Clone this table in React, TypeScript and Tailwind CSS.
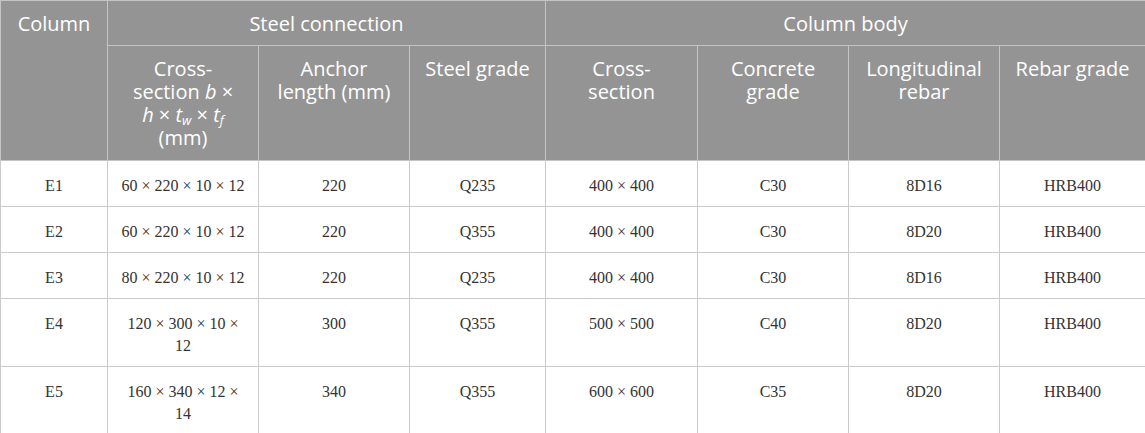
import React from "react";

const widths = [107, 151, 151, 136, 152, 151, 151, 146];

const rows: { c: string; cs: React.ReactNode; a: string; sg: string; x: string; cg: string; lr: string; rg: string }[] = [
  { c: "E1", cs: "60 × 220 × 10 × 12", a: "220", sg: "Q235", x: "400 × 400", cg: "C30", lr: "8D16", rg: "HRB400" },
  { c: "E2", cs: "60 × 220 × 10 × 12", a: "220", sg: "Q355", x: "400 × 400", cg: "C30", lr: "8D20", rg: "HRB400" },
  { c: "E3", cs: "80 × 220 × 10 × 12", a: "220", sg: "Q235", x: "400 × 400", cg: "C30", lr: "8D16", rg: "HRB400" },
  { c: "E4", cs: <>120 × 300 × 10 ×<br />12</>, a: "300", sg: "Q355", x: "500 × 500", cg: "C40", lr: "8D20", rg: "HRB400" },
  { c: "E5", cs: <>160 × 340 × 12 ×<br />14</>, a: "340", sg: "Q355", x: "600 × 600", cg: "C35", lr: "8D20", rg: "HRB400" },
];

const th = "border border-[#c4c4c4] text-center font-normal px-1";
const thTop = `${th} align-top pt-[11px]`;
const td = "border border-[#cacaca] align-top text-center pt-[14px] pb-[9px] px-2";

export default function App() {
  return (
    <div className="w-[1145px] h-[433px] bg-white overflow-hidden">
      <table className="table-fixed border-collapse w-[1145px]">
        <colgroup>
          {widths.map((w, i) => (
            <col key={i} style={{ width: w }} />
          ))}
        </colgroup>
        <thead className="bg-[#949494] text-white text-[20px] leading-[23px] [font-family:'Open_Sans',sans-serif]">
          <tr className="h-[45px]">
            <th rowSpan={2} className={thTop}>Column</th>
            <th colSpan={3} className={`${th} align-middle`}>Steel connection</th>
            <th colSpan={4} className={`${th} align-middle`}>Column body</th>
          </tr>
          <tr className="h-[115px]">
            <th className={thTop}>
              Cross-<br />section <i>b</i> ×<br />
              <i>h</i> × <i>t</i><sub className="text-[13px] leading-none"><i>w</i></sub> × <i>t</i><sub className="text-[13px] leading-none"><i>f</i></sub>
              <br />(mm)
            </th>
            <th className={thTop}>Anchor<br />length (mm)</th>
            <th className={thTop}>Steel grade</th>
            <th className={thTop}>Cross-<br />section</th>
            <th className={thTop}>Concrete<br />grade</th>
            <th className={thTop}>Longitudinal<br />rebar</th>
            <th className={thTop}>Rebar grade</th>
          </tr>
        </thead>
        <tbody className="text-[16px] leading-[22px] text-[#333] [font-family:'Liberation_Serif',serif]">
          {rows.map((r) => (
            <tr key={r.c}>
              <td className={td}>{r.c}</td>
              <td className={td}>{r.cs}</td>
              <td className={td}>{r.a}</td>
              <td className={td}>{r.sg}</td>
              <td className={td}>{r.x}</td>
              <td className={td}>{r.cg}</td>
              <td className={td}>{r.lr}</td>
              <td className={td}>{r.rg}</td>
            </tr>
          ))}
        </tbody>
      </table>
    </div>
  );
}
